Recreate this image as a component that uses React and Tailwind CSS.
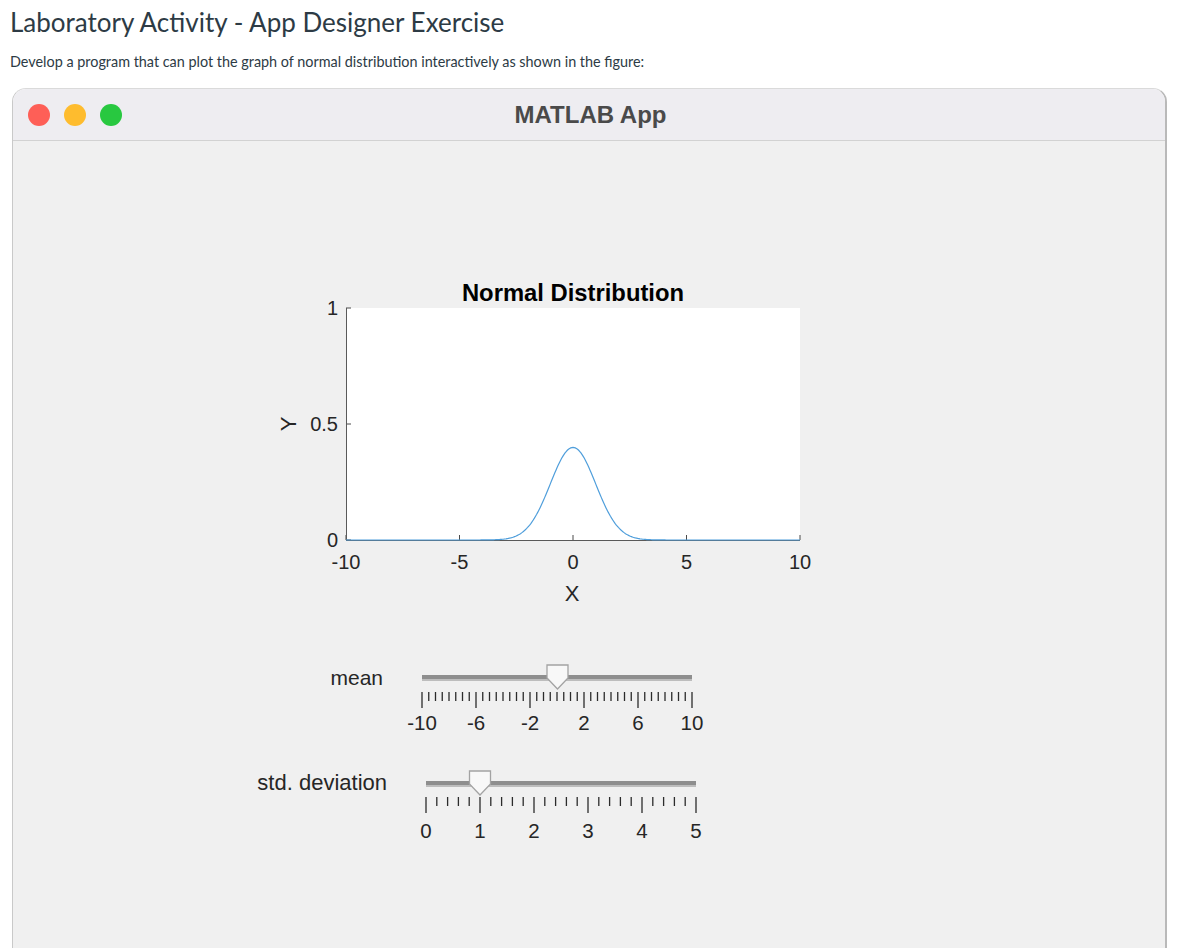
import React from "react";

const FONT = { fontFamily: '"Liberation Sans", Arial, Helvetica, sans-serif' };

function pdf(x, mu, s) {
  return Math.exp(-((x - mu) ** 2) / (2 * s * s)) / (s * Math.sqrt(2 * Math.PI));
}

function Chart() {
  const x0 = 346, x1 = 800, y0 = 308, y1 = 540;
  const sx = (v) => x0 + ((v + 10) / 20) * (x1 - x0);
  const sy = (v) => y1 - v * (y1 - y0);
  const pts = [];
  for (let i = 0; i <= 400; i++) {
    const v = -10 + (i * 20) / 400;
    pts.push(`${sx(v).toFixed(2)},${sy(pdf(v, 0, 1)).toFixed(2)}`);
  }
  const xt = [-10, -5, 0, 5, 10];
  const yt = [
    [0, "0"],
    [0.5, "0.5"],
    [1, "1"],
  ];
  return (
    <svg width="570" height="340" viewBox="260 270 570 340" style={FONT} className="block">
      <rect x={x0} y={y0} width={x1 - x0} height={y1 - y0} fill="#ffffff" />
      <text x="573" y="292" textAnchor="middle" dominantBaseline="central" fontSize="23.8" fontWeight="700" fill="#000">
        Normal Distribution
      </text>
      {yt.map(([v, l]) => (
        <g key={l}>
          <line x1={x0} x2={x0 + 5} y1={sy(v)} y2={sy(v)} stroke="#4a4a4a" strokeWidth="1" />
          <text x="338" y={sy(v)} textAnchor="end" dominantBaseline="central" fontSize="20" fill="#262626">
            {l}
          </text>
        </g>
      ))}
      {xt.map((v) => (
        <g key={v}>
          <line x1={sx(v)} x2={sx(v)} y1={y1} y2={y1 - 5} stroke="#4a4a4a" strokeWidth="1" />
          <text x={sx(v)} y="562" textAnchor="middle" dominantBaseline="central" fontSize="20" fill="#262626">
            {v}
          </text>
        </g>
      ))}
      <line x1={x0 + 0.5} x2={x0 + 0.5} y1={y0} y2={y1} stroke="#5a5a5a" strokeWidth="1" />
      <line x1={x0} x2={x1} y1={y1 + 0.5} y2={y1 + 0.5} stroke="#5a5a5a" strokeWidth="1" />
      <polyline points={pts.join(" ")} fill="none" stroke="#4f9edb" strokeWidth="1.2" />
      <text x="572" y="593" textAnchor="middle" dominantBaseline="central" fontSize="22" fill="#262626">
        X
      </text>
      <text
        x="288"
        y="424"
        textAnchor="middle"
        dominantBaseline="central"
        fontSize="22"
        fill="#262626"
        transform="rotate(-90 288 424)"
      >
        Y
      </text>
    </svg>
  );
}

function Slider({ vb, trackX0, trackX1, trackY, thumbX, thumbTop, min, max, step, majorEvery, labels, tickY, labelY }) {
  const scale = (v) => trackX0 + ((v - min) / (max - min)) * (trackX1 - trackX0);
  const ticks = [];
  const n = Math.round((max - min) / step);
  for (let i = 0; i <= n; i++) {
    const v = min + i * step;
    const major = i % majorEvery === 0;
    ticks.push(
      <line
        key={i}
        x1={scale(v)}
        x2={scale(v)}
        y1={tickY}
        y2={tickY + (major ? 16 : 9)}
        stroke="#2b2b2b"
        strokeWidth="1.3"
      />
    );
  }
  const w = 10.5;
  return (
    <svg width="320" height="100" viewBox={vb} style={FONT} className="block">
      <rect x={trackX0} y={trackY} width={trackX1 - trackX0} height="4" fill="#8e8e8e" />
      <rect x={trackX0} y={trackY + 4} width={trackX1 - trackX0} height="2" fill="#bdbdbd" />
      {ticks}
      {labels.map((l) => (
        <text key={l} x={scale(l)} y={labelY} textAnchor="middle" dominantBaseline="central" fontSize="20.5" fill="#262626">
          {l}
        </text>
      ))}
      <path
        d={`M${thumbX - w},${thumbTop} H${thumbX + w} V${thumbTop + 13} L${thumbX},${thumbTop + 24} L${thumbX - w},${thumbTop + 13} Z`}
        fill="#f8f8f8"
        stroke="#a3a3a3"
        strokeWidth="1.3"
      />
    </svg>
  );
}

export default function App() {
  return (
    <div className="w-full h-[948px] overflow-hidden bg-white flex flex-col" style={{ fontFamily: 'Lato, "Open Sans", sans-serif' }}>
      <h1 className="ml-[10px] mt-[6px] text-[26px] leading-[32px] text-[#2d3b45] font-normal">
        Laboratory Activity - App Designer Exercise
      </h1>
      <p className="ml-[10px] mt-[14px] text-[14.4px] leading-[20px] text-[#2d3b45]">
        Develop a program that can plot the graph of normal distribution interactively as shown in the figure:
      </p>
      <div className="relative ml-[12px] mt-[16px] w-[1155px] flex-1 flex flex-col rounded-t-[14px] border-t border-l border-r-2 border-t-[#dadada] border-l-[#c9c9c9] border-r-[#b9b9b9] overflow-hidden">
        <div className="absolute top-[-1px] left-[365px] w-[178px] h-[2px] bg-[#bcbcbc]" />
        <div className="h-[52px] shrink-0 bg-[#eeedf1] border-b border-[#d2d2d2] flex items-center relative">
          <div className="flex items-center gap-[14px] ml-[15px]">
            <span className="w-[22px] h-[22px] rounded-full bg-[#fe5f57]" />
            <span className="w-[22px] h-[22px] rounded-full bg-[#febc2e]" />
            <span className="w-[22px] h-[22px] rounded-full bg-[#28c840]" />
          </div>
          <div
            className="absolute left-0 right-0 text-center pointer-events-none text-[24px] font-bold text-[#4a4a4a] leading-[28px]"
            style={FONT}
          >
            <span className="ml-[3px]">MATLAB App</span>
          </div>
        </div>
        <div className="flex-1 bg-[#f0f0f0] flex flex-col">
          <div className="ml-[247px] mt-[129px]">
            <Chart />
          </div>
          <div className="mt-[40px] flex flex-col">
            <div className="flex ml-[227px]">
              <div className="w-[160px] pr-[17px] text-right text-[21px] leading-[24px] text-[#262626] mt-[16px]" style={FONT}>
                mean
              </div>
              <Slider
                vb="400 650 320 100"
                trackX0={422}
                trackX1={692}
                trackY={675}
                thumbX={557.5}
                thumbTop={665}
                min={-10}
                max={10}
                step={0.5}
                majorEvery={8}
                labels={[-10, -6, -2, 2, 6, 10]}
                tickY={692}
                labelY={722}
              />
            </div>
            <div className="flex ml-[227px]">
              <div className="w-[160px] pr-[13px] text-right text-[22px] leading-[24px] text-[#262626] mt-[21px]" style={FONT}>
                std. deviation
              </div>
              <Slider
                vb="400 750 320 100"
                trackX0={426}
                trackX1={696}
                trackY={781}
                thumbX={480}
                thumbTop={771}
                min={0}
                max={5}
                step={0.2}
                majorEvery={5}
                labels={[0, 1, 2, 3, 4, 5]}
                tickY={797}
                labelY={830}
              />
            </div>
          </div>
        </div>
      </div>
    </div>
  );
}
